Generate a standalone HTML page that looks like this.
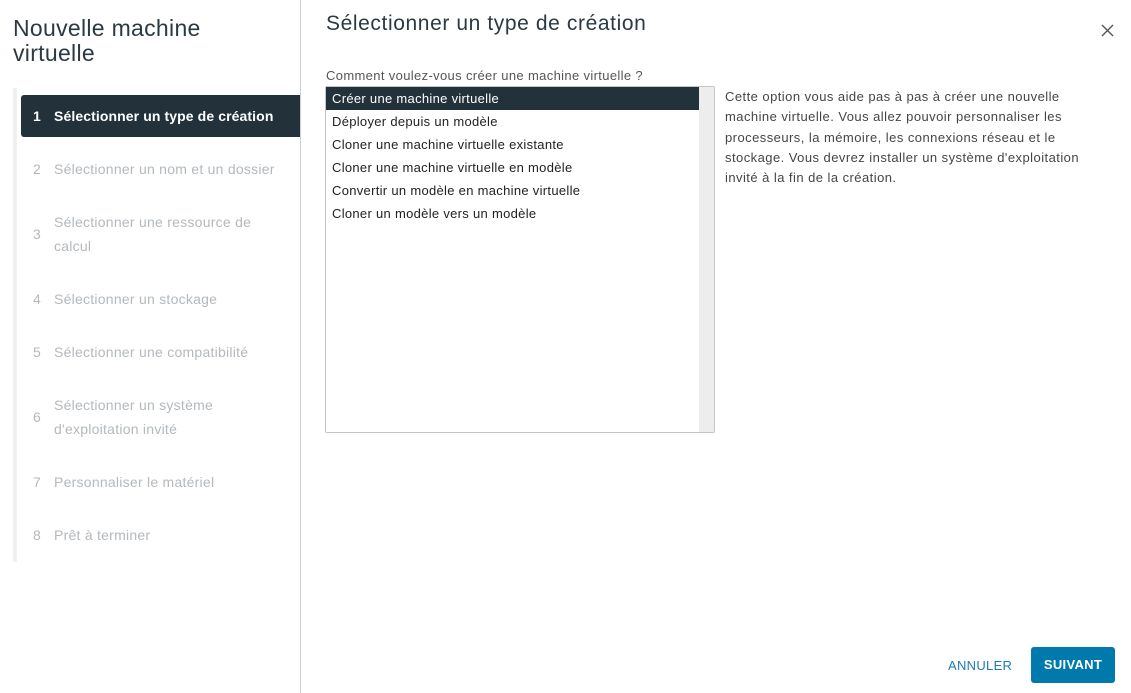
<!DOCTYPE html>
<html><head><meta charset="utf-8"><style>
*{margin:0;padding:0;box-sizing:border-box}
body{width:1131px;height:693px;background:#fff;font-family:"Liberation Sans",sans-serif;color:#333;position:relative;overflow:hidden;letter-spacing:.25px}
.abs{position:absolute}
h1{position:absolute;left:13px;top:16px;font-size:23px;font-weight:normal;line-height:25px;color:#2b3a42;letter-spacing:.3px}
.rail{left:13px;top:88px;width:4px;height:474px;background:#eef0f2}
.div{left:300px;top:0;width:1px;height:693px;background:#c9d1d6}
.step{position:absolute;left:21px;width:279px;font-size:14px;color:#b3b9bd;line-height:24px}
.step .n{position:absolute;left:12px}
.step .t{position:absolute;left:33px;width:222px}
.sel{background:#22313a;color:#fff;font-weight:bold;border-radius:3px 0 0 3px;height:42px;letter-spacing:.1px}
h2{position:absolute;left:326px;top:12px;font-size:21px;font-weight:normal;color:#2b3a42;letter-spacing:.6px}
.lbl{left:326px;top:68px;font-size:13px;color:#565656;letter-spacing:.35px}
.box{left:325px;top:86px;width:390px;height:347px;border:1px solid #c5c5c5;border-radius:2px}
.sb{position:absolute;right:0;top:0;width:15px;height:345px;background:#ededed}
.it{position:absolute;left:0;width:373px;height:23px;font-size:13px;line-height:23px;padding-left:6px;color:#222;letter-spacing:.3px}
.desc{left:725px;top:87px;width:385px;font-size:13px;line-height:20.3px;color:#454545;letter-spacing:.45px}
.btn{font-size:13px;font-weight:bold;letter-spacing:.3px}
</style></head><body>
<h1>Nouvelle machine<br>virtuelle</h1>
<div class="abs rail"></div>
<div class="abs div"></div>
<div class="step sel" style="top:95px"><span class="n" style="top:9px">1</span><span class="t" style="top:9px;width:250px">Sélectionner un type de création</span></div>
<div class="step" style="top:157px"><span class="n">2</span><span class="t" style="width:250px">Sélectionner un nom et un dossier</span></div>
<div class="step" style="top:210px"><span class="n" style="top:12px">3</span><span class="t" style="width:215px">Sélectionner une ressource de calcul</span></div>
<div class="step" style="top:287px"><span class="n">4</span><span class="t">Sélectionner un stockage</span></div>
<div class="step" style="top:340px"><span class="n">5</span><span class="t">Sélectionner une compatibilité</span></div>
<div class="step" style="top:393px"><span class="n" style="top:12px">6</span><span class="t" style="width:180px">Sélectionner un système d'exploitation invité</span></div>
<div class="step" style="top:470px"><span class="n">7</span><span class="t">Personnaliser le matériel</span></div>
<div class="step" style="top:523px"><span class="n">8</span><span class="t">Prêt à terminer</span></div>
<h2>Sélectionner un type de création</h2>
<svg class="abs" style="left:1101px;top:24px" width="13" height="13" viewBox="0 0 13 13"><path d="M1 1L12 12M12 1L1 12" stroke="#555" stroke-width="1.4"/></svg>
<div class="abs lbl">Comment voulez-vous créer une machine virtuelle ?</div>
<div class="abs box"><div class="sb"></div>
<div class="it" style="top:0;background:#22313a;color:#fff">Créer une machine virtuelle</div>
<div class="it" style="top:23px">Déployer depuis un modèle</div>
<div class="it" style="top:46px">Cloner une machine virtuelle existante</div>
<div class="it" style="top:69px">Cloner une machine virtuelle en modèle</div>
<div class="it" style="top:92px">Convertir un modèle en machine virtuelle</div>
<div class="it" style="top:115px">Cloner un modèle vers un modèle</div>
</div>
<div class="abs desc">Cette option vous aide pas à pas à créer une nouvelle machine virtuelle. Vous allez pouvoir personnaliser les processeurs, la mémoire, les connexions réseau et le stockage. Vous devrez installer un système d'exploitation invité à la fin de la création.</div>
<div class="abs btn" style="left:948px;top:658px;color:#1b7db3;font-weight:normal">ANNULER</div>
<div class="abs btn" style="left:1031px;top:647px;width:84px;height:36px;background:#0079ad;color:#fff;border-radius:3px;text-align:center;line-height:36px">SUIVANT</div>
</body></html>
